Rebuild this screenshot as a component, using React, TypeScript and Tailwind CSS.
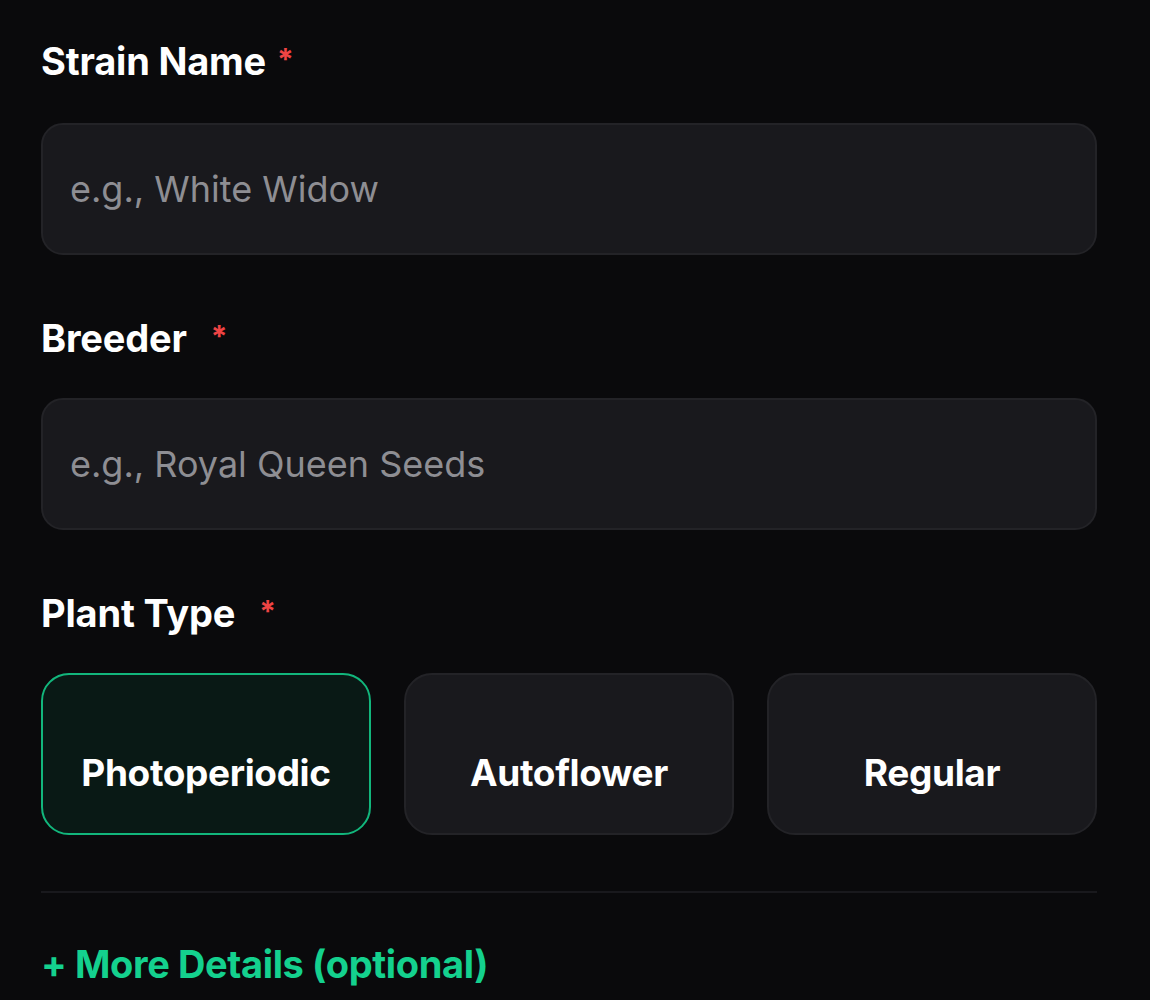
import React from "react";

const font = { fontFamily: "Inter, 'Noto Sans', sans-serif" };

function Label({ text, gap }: { text: string; gap: string }) {
  return (
    <div className="flex items-start text-[38px] font-bold leading-[46px] tracking-[-0.005em] text-white">
      <span>{text}</span>
      <span className={`${gap} mt-[6px] text-[30px] leading-[30px] text-[#ef4444]`}>*</span>
    </div>
  );
}

function Field({ placeholder }: { placeholder: string }) {
  return (
    <div className="flex h-[132px] items-center rounded-[22px] border-2 border-[#232327] bg-[#19191d] px-[27px]">
      <span className="text-[36px] text-[#8e8e93]">{placeholder}</span>
    </div>
  );
}

function TypeButton({ text, selected }: { text: string; selected?: boolean }) {
  return (
    <div
      className={`flex h-[162px] items-end justify-center rounded-[28px] border-2 pb-[38px] ${
        selected ? "border-[#12b67c] bg-[#091915]" : "border-[#232327] bg-[#19191d]"
      }`}
    >
      <span className="text-[37px] font-bold leading-[44px] tracking-[-0.01em] text-white">{text}</span>
    </div>
  );
}

export default function App() {
  return (
    <div className="min-h-[1000px] w-[1150px] bg-[#0a0a0c] pl-[41px] pr-[53px] pt-[38px]" style={font}>
      <Label text="Strain Name" gap="ml-[11px]" />
      <div className="mt-[39px]">
        <Field placeholder="e.g., White Widow" />
      </div>
      <div className="mt-[60px]">
        <Label text="Breeder" gap="ml-[24px]" />
      </div>
      <div className="mt-[37px]">
        <Field placeholder="e.g., Royal Queen Seeds" />
      </div>
      <div className="mt-[60px]">
        <Label text="Plant Type" gap="ml-[24px]" />
      </div>
      <div className="mt-[37px] grid grid-cols-3 gap-[33px]">
        <TypeButton text="Photoperiodic" selected />
        <TypeButton text="Autoflower" />
        <TypeButton text="Regular" />
      </div>
      <div className="mt-[56px] h-[2px] bg-[#19191d]" />
      <div className="mt-[49px] text-[38px] font-bold leading-[44px] tracking-[-0.01em] text-[#14d18e]">
        + More Details (optional)
      </div>
    </div>
  );
}
